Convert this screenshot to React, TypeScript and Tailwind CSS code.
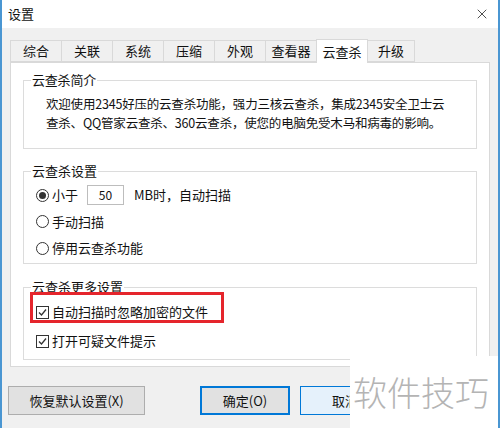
import { X } from "lucide-react";

const font = "font-['Noto_Sans_CJK_SC','Microsoft_YaHei',sans-serif]";

function Radio({ checked, label }: { checked?: boolean; label: string }) {
  return (
    <div className="flex items-center h-[20px]">
      <span className="w-[13px] h-[13px] rounded-full border border-[#333] bg-white flex items-center justify-center">
        {checked && <span className="w-[7px] h-[7px] rounded-full bg-[#333]" />}
      </span>
      <span className="ml-[3px]">{label}</span>
    </div>
  );
}

function Check({ label }: { label: string }) {
  return (
    <div className="flex items-center h-[20px]">
      <span className="w-[13px] h-[13px] border border-[#333] bg-white flex items-center justify-center">
        <svg width="11" height="11" viewBox="0 0 11 11">
          <path d="M2 5.5 L4.5 8 L9 2.5" fill="none" stroke="#333" strokeWidth="1.3" />
        </svg>
      </span>
      <span className="ml-[3px]">{label}</span>
    </div>
  );
}

function Group({ title, className, children }: { title: string; className?: string; children: React.ReactNode }) {
  return (
    <div className={"relative border border-[#dcdcdc] mx-[12px] " + (className ?? "")}>
      <span className="absolute left-[7px] -top-[10px] bg-white px-[1px] leading-[18px] text-[13px]">{title}</span>
      {children}
    </div>
  );
}

export default function App() {
  const tabs = ["综合", "关联", "系统", "压缩", "外观", "查看器"];
  return (
    <div className={`relative w-[500px] h-[428px] overflow-hidden bg-[#f0f0f0] border-x-2 border-[#4a96d2] text-[13px] text-[#111] ${font}`}>
      <div className="h-[28px] bg-white flex items-center justify-between pl-[6px] pr-[8px]">
        <span className="text-[13px]">设置</span>
        <X className="w-[16px] h-[16px] text-[#222]" strokeWidth={1.2} />
      </div>

      <div className="flex items-end ml-[8px] mt-[10px] h-[24px]">
        {tabs.map((t) => (
          <div key={t} className="w-[51px] h-[22px] border border-[#d9d9d9] border-r-0 bg-[#f0f0f0] flex items-center justify-center">
            {t}
          </div>
        ))}
        <div className="w-[52px] h-[24px] border border-b-0 border-[#d9d9d9] bg-white flex items-center justify-center relative z-10 -mb-px">
          云查杀
        </div>
        <div className="w-[47px] h-[22px] border border-l-0 border-[#d9d9d9] bg-[#f0f0f0] flex items-center justify-center">
          升级
        </div>
      </div>

      <div className="ml-[8px] w-[480px] h-[305px] bg-white border border-[#d9d9d9] pt-[17px]">
        <Group title="云查杀简介" className="h-[69px] pl-[22px] pt-[13px] leading-[19px] text-[12.5px] tracking-[-0.2px]">
          <p>欢迎使用2345好压的云查杀功能，强力三核云查杀，集成2345安全卫士云</p>
          <p>查杀、QQ管家云查杀、360云查杀，使您的电脑免受木马和病毒的影响。</p>
        </Group>

        <Group title="云查杀设置" className="mt-[22px] h-[93px] pl-[12px] pt-[13px] flex flex-col gap-[6.5px]">
          <div className="flex items-center h-[20px]">
            <Radio checked label="小于" />
            <span className="ml-[9px] w-[37px] h-[20px] border border-[#bdbdbd] flex items-center justify-center text-[12px]">50</span>
            <span className="ml-[10px]">MB时，自动扫描</span>
          </div>
          <Radio label="手动扫描" />
          <Radio label="停用云查杀功能" />
        </Group>

        <Group title="云查杀更多设置" className="mt-[23px] h-[73px] pl-[12px] pt-[14px] flex flex-col gap-[9px]">
          <Check label="自动扫描时忽略加密的文件" />
          <Check label="打开可疑文件提示" />
          <div className="absolute left-[6px] top-[4px] w-[194px] h-[31px] border-[3px] border-[#e5252c]" />
        </Group>
      </div>

      <div className="flex items-center mt-[19px] ml-[6px] h-[29px]">
        <button className="w-[137px] h-[29px] bg-[#e1e1e1] border border-[#adadad]">恢复默认设置(X)</button>
        <button className="ml-[55px] w-[90px] h-[29px] bg-[#e1e1e1] border-2 border-[#0078d7]">确定(O)</button>
        <button className="ml-[10px] w-[90px] h-[29px] bg-[#e5f1fb] border border-[#0078d7]">取消</button>
      </div>

      <div className="absolute left-[348px] top-[356px] w-[150px] h-[72px] bg-white flex items-center pl-[3px]">
        <span className="whitespace-nowrap text-[34px] leading-none text-[#b4b4b4] font-light">软件技巧</span>
      </div>
    </div>
  );
}
